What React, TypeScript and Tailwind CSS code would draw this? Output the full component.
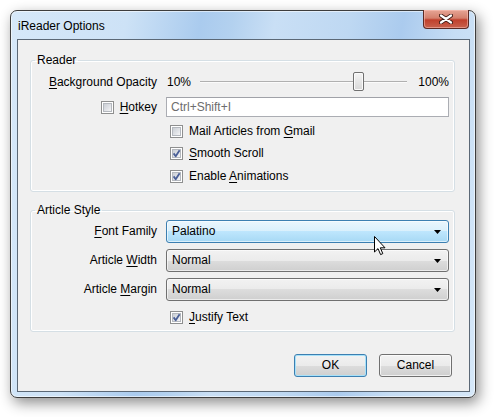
import React from "react";

function CheckBox({ checked }: { checked?: boolean }) {
  return (
    <div className="relative w-[13px] h-[13px] border border-[#8e8f8f] bg-white p-[1px] shrink-0">
      <div className="w-full h-full border border-[#b4b8be] bg-[linear-gradient(135deg,#cbcfd5_0%,#e2e4e8_60%,#f6f6f6_100%)]" />
      {checked && (
        <svg className="absolute left-[0px] top-[0px]" width="11" height="11" viewBox="0 0 11 11">
          <path d="M2.6 5.4 L4.7 8.2 L8.6 2.3" fill="none" stroke="#4a5f97" strokeWidth="1.8" strokeLinejoin="round" />
        </svg>
      )}
    </div>
  );
}

function CheckRow({ checked, children }: { checked?: boolean; children: React.ReactNode }) {
  return (
    <div className="flex items-center gap-[6px] pl-[4px] h-full">
      <CheckBox checked={checked} />
      <span>{children}</span>
    </div>
  );
}

function Arrow() {
  return (
    <svg width="7" height="4" viewBox="0 0 7 4" className="shrink-0">
      <polygon points="0,0 7,0 3.5,4" fill="#000" />
    </svg>
  );
}

function Combo({ value, hot }: { value: string; hot?: boolean }) {
  return (
    <div
      className={
        hot
          ? "h-[23px] rounded-[3px] border border-[#3c7fb1] shadow-[inset_0_0_0_1px_rgba(255,255,255,0.6)] bg-[linear-gradient(#eaf6fd_0%,#d9f0fc_50%,#bee6fd_50%,#a7d9f5_100%)] flex items-center pl-[5px] pr-[7px]"
          : "h-[23px] rounded-[3px] border border-[#707070] shadow-[inset_0_0_0_1px_rgba(255,255,255,0.6)] bg-[linear-gradient(#f2f2f2_0%,#ebebeb_50%,#dddddd_50%,#cfcfcf_100%)] flex items-center pl-[5px] pr-[7px]"
      }
    >
      <span className="flex-1">{value}</span>
      <Arrow />
    </div>
  );
}

function Label({ children }: { children: React.ReactNode }) {
  return <div className="flex items-center justify-end h-full whitespace-nowrap">{children}</div>;
}

const U = ({ c }: { c: string }) => <span className="underline underline-offset-[2px]">{c}</span>;

export default function App() {
  return (
    <div
      className="w-[495px] h-[417px] bg-white pt-[10px] pl-[10px] text-[12px] leading-[15px] text-[#000]"
      style={{ fontFamily: '"Liberation Sans", Arial, sans-serif' }}
    >
      <div className="relative w-[466px] h-[388px] rounded-[7px] border border-[#3d3d3d] shadow-[3px_5px_14px_rgba(0,0,0,0.45),inset_0_0_0_1px_rgba(255,255,255,0.55)] bg-[linear-gradient(100deg,#d6e8f9_0%,#cde2f6_22%,#aacbee_36%,#b3d1ef_42%,#c9dff5_50%,#bed8f2_64%,#abcbee_74%,#c6ddf4_84%,#d6e8f9_100%)] flex flex-col">
        {/* Title bar */}
        <div className="h-[28px] flex items-start shrink-0">
          <div className="flex-1 pl-[7px] pt-[8px] text-[12px] leading-[15px] text-[#000]">iReader Options</div>
          <div className="-mt-[1px] mr-[6px] w-[46px] h-[19px] rounded-b-[4px] border border-[#5c2a24] border-t-0 shadow-[inset_0_0_0_1px_rgba(255,200,190,0.5)] bg-[linear-gradient(#e6a595_0%,#d4806d_45%,#c0402c_55%,#c8624e_100%)] flex items-center justify-center">
            <svg width="14" height="10" viewBox="0 0 14 10">
              <path d="M2 1.5 L12 8.5 M12 1.5 L2 8.5" stroke="#3d1a14" strokeWidth="4" strokeLinecap="round" />
              <path d="M2 1.5 L12 8.5 M12 1.5 L2 8.5" stroke="#ffffff" strokeWidth="2.2" strokeLinecap="round" />
            </svg>
          </div>
        </div>

        {/* Client area */}
        <div className="ml-[6px] mr-[5px] h-[353px] border border-[#5b6876] bg-[#f0f0f0] flex flex-col">
          {/* Reader group */}
          <fieldset className="mt-[13px] ml-[12px] w-[425px] rounded-[3px] border border-[#d5dfe5] shadow-[inset_0_0_0_1px_#ffffff]">
            <legend className="ml-[4px] px-[2px] leading-[15px]">Reader</legend>
            <div className="grid grid-cols-[126px_283px] gap-x-[9px] pt-[3px] pb-[3px]">
              <div className="h-[22px]">
                <Label>
                  <span>
                    <U c="B" />ackground Opacity
                  </span>
                </Label>
              </div>
              <div className="h-[22px] flex items-center">
                <span className="pl-[1px]">10%</span>
                <div className="relative flex-1 ml-[9px] mr-[11px] h-[22px]">
                  <div className="absolute left-0 right-0 top-[10px] h-[1px] bg-[#b0b0b0]" />
                  <div className="absolute left-0 right-0 top-[11px] h-[1px] bg-[#fbfbfb]" />
                  <div className="absolute left-[153px] top-[1px] w-[11px] h-[19px] rounded-[2px] border border-[#707070] shadow-[inset_0_0_0_1px_#fafafa] bg-[linear-gradient(#f4f4f4_0%,#e6e6e6_50%,#d8d8d8_100%)]" />
                </div>
                <span>100%</span>
              </div>

              <div className="h-[20px] mt-[4px]">
                <Label>
                  <div className="flex items-center gap-[6px]">
                    <CheckBox />
                    <span>
                      <U c="H" />otkey
                    </span>
                  </div>
                </Label>
              </div>
              <div className="h-[20px] mt-[4px] border border-[#abadb3] border-t-[#a0a2a8] bg-white flex items-center pl-[4px] text-[#6d6d6d]">
                Ctrl+Shift+I
              </div>

              <div className="h-[22px] mt-[3px]" />
              <div className="h-[22px] mt-[3px]">
                <CheckRow>
                  Mail Articles from <U c="G" />mail
                </CheckRow>
              </div>

              <div className="h-[23px]" />
              <div className="h-[23px]">
                <CheckRow checked>
                  <U c="S" />mooth Scroll
                </CheckRow>
              </div>

              <div className="h-[23px]" />
              <div className="h-[23px]">
                <CheckRow checked>
                  Enable <U c="A" />nimations
                </CheckRow>
              </div>
            </div>
          </fieldset>

          {/* Article Style group */}
          <fieldset className="mt-[11px] ml-[12px] w-[425px] rounded-[3px] border border-[#d5dfe5] shadow-[inset_0_0_0_1px_#ffffff]">
            <legend className="ml-[4px] px-[2px] leading-[15px]">Article Style</legend>
            <div className="grid grid-cols-[126px_283px] gap-x-[9px] gap-y-[6px] pt-[2px] pb-[3px]">
              <div className="h-[23px]">
                <Label>
                  <span>
                    <U c="F" />ont Family
                  </span>
                </Label>
              </div>
              <Combo value="Palatino" hot />

              <div className="h-[23px]">
                <Label>
                  <span>
                    Article <U c="W" />idth
                  </span>
                </Label>
              </div>
              <Combo value="Normal" />

              <div className="h-[23px]">
                <Label>
                  <span>
                    Article <U c="M" />argin
                  </span>
                </Label>
              </div>
              <Combo value="Normal" />

              <div className="h-[22px] -mt-[1px]" />
              <div className="h-[22px] -mt-[1px]">
                <CheckRow checked>
                  <U c="J" />ustify Text
                </CheckRow>
              </div>
            </div>
          </fieldset>

          {/* Buttons */}
          <div className="flex justify-end gap-[12px] mt-[22px] mr-[17px]">
            <button className="w-[73px] h-[23px] rounded-[3px] border border-[#3c7fb1] shadow-[inset_0_0_0_1px_#a7e1f9] bg-[linear-gradient(#f2f2f2_0%,#ebebeb_50%,#dddddd_50%,#cfcfcf_100%)] text-[12px] leading-[15px]">
              OK
            </button>
            <button className="w-[73px] h-[23px] rounded-[3px] border border-[#707070] shadow-[inset_0_0_0_1px_rgba(255,255,255,0.7)] bg-[linear-gradient(#f2f2f2_0%,#ebebeb_50%,#dddddd_50%,#cfcfcf_100%)] text-[12px] leading-[15px]">
              Cancel
            </button>
          </div>
        </div>

        {/* Mouse cursor */}
        <svg className="absolute left-[363px] top-[225px]" width="13" height="20" viewBox="0 0 13 20">
          <path d="M0.5 0.5 L0.5 16 L4 12.6 L6.6 18.6 L8.8 17.6 L6.3 11.8 L11 11.8 Z" fill="#fff" stroke="#000" strokeWidth="1" strokeLinejoin="round" />
        </svg>
      </div>
    </div>
  );
}
